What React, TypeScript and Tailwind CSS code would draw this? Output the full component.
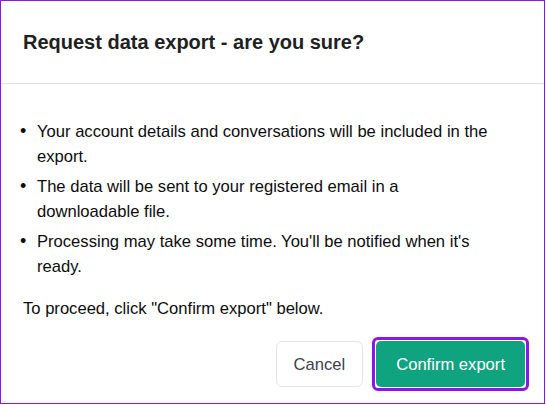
const items = [
  'Your account details and conversations will be included in the export.',
  'The data will be sent to your registered email in a downloadable file.',
  "Processing may take some time. You'll be notified when it's ready.",
];

export default function App() {
  return (
    <div className="w-[546px] h-[405px] bg-white font-['Liberation_Sans',Arial,sans-serif]">
      <div className="w-[545px] h-[404px] border border-[#8e14ec] flex flex-col">
        <div className="h-[83px] border-b border-[#e3e3e3] flex items-center px-[22px]">
          <h2 className="text-[20px] font-bold text-[#202123]">Request data export - are you sure?</h2>
        </div>
        <div className="flex flex-col pl-[22px] pr-[15px] pt-[35px] text-[16.6px] leading-[25px] text-[#0d0d0d]">
          <ul className="flex flex-col gap-[5px] -ml-[3px] w-[478px]">
            {items.map((t) => (
              <li key={t} className="flex">
                <span className="w-[17px] shrink-0 text-[18px] leading-[25px]">•</span>
                <span>{t}</span>
              </li>
            ))}
          </ul>
          <p className="mt-[17px]">To proceed, click "Confirm export" below.</p>
          <div className="mt-[16px] flex justify-end items-center gap-[9px]">
            <button className="h-[46px] px-[17px] rounded-[6px] border border-[#e5e5e5] text-[#40414f] bg-white">
              Cancel
            </button>
            <div className="p-[1px] rounded-[6px] border-[3px] border-[#8e14ec]">
              <button className="h-[46px] px-[20px] rounded-[5px] bg-[#10a37f] text-white">
                Confirm export
              </button>
            </div>
          </div>
        </div>
      </div>
    </div>
  );
}
